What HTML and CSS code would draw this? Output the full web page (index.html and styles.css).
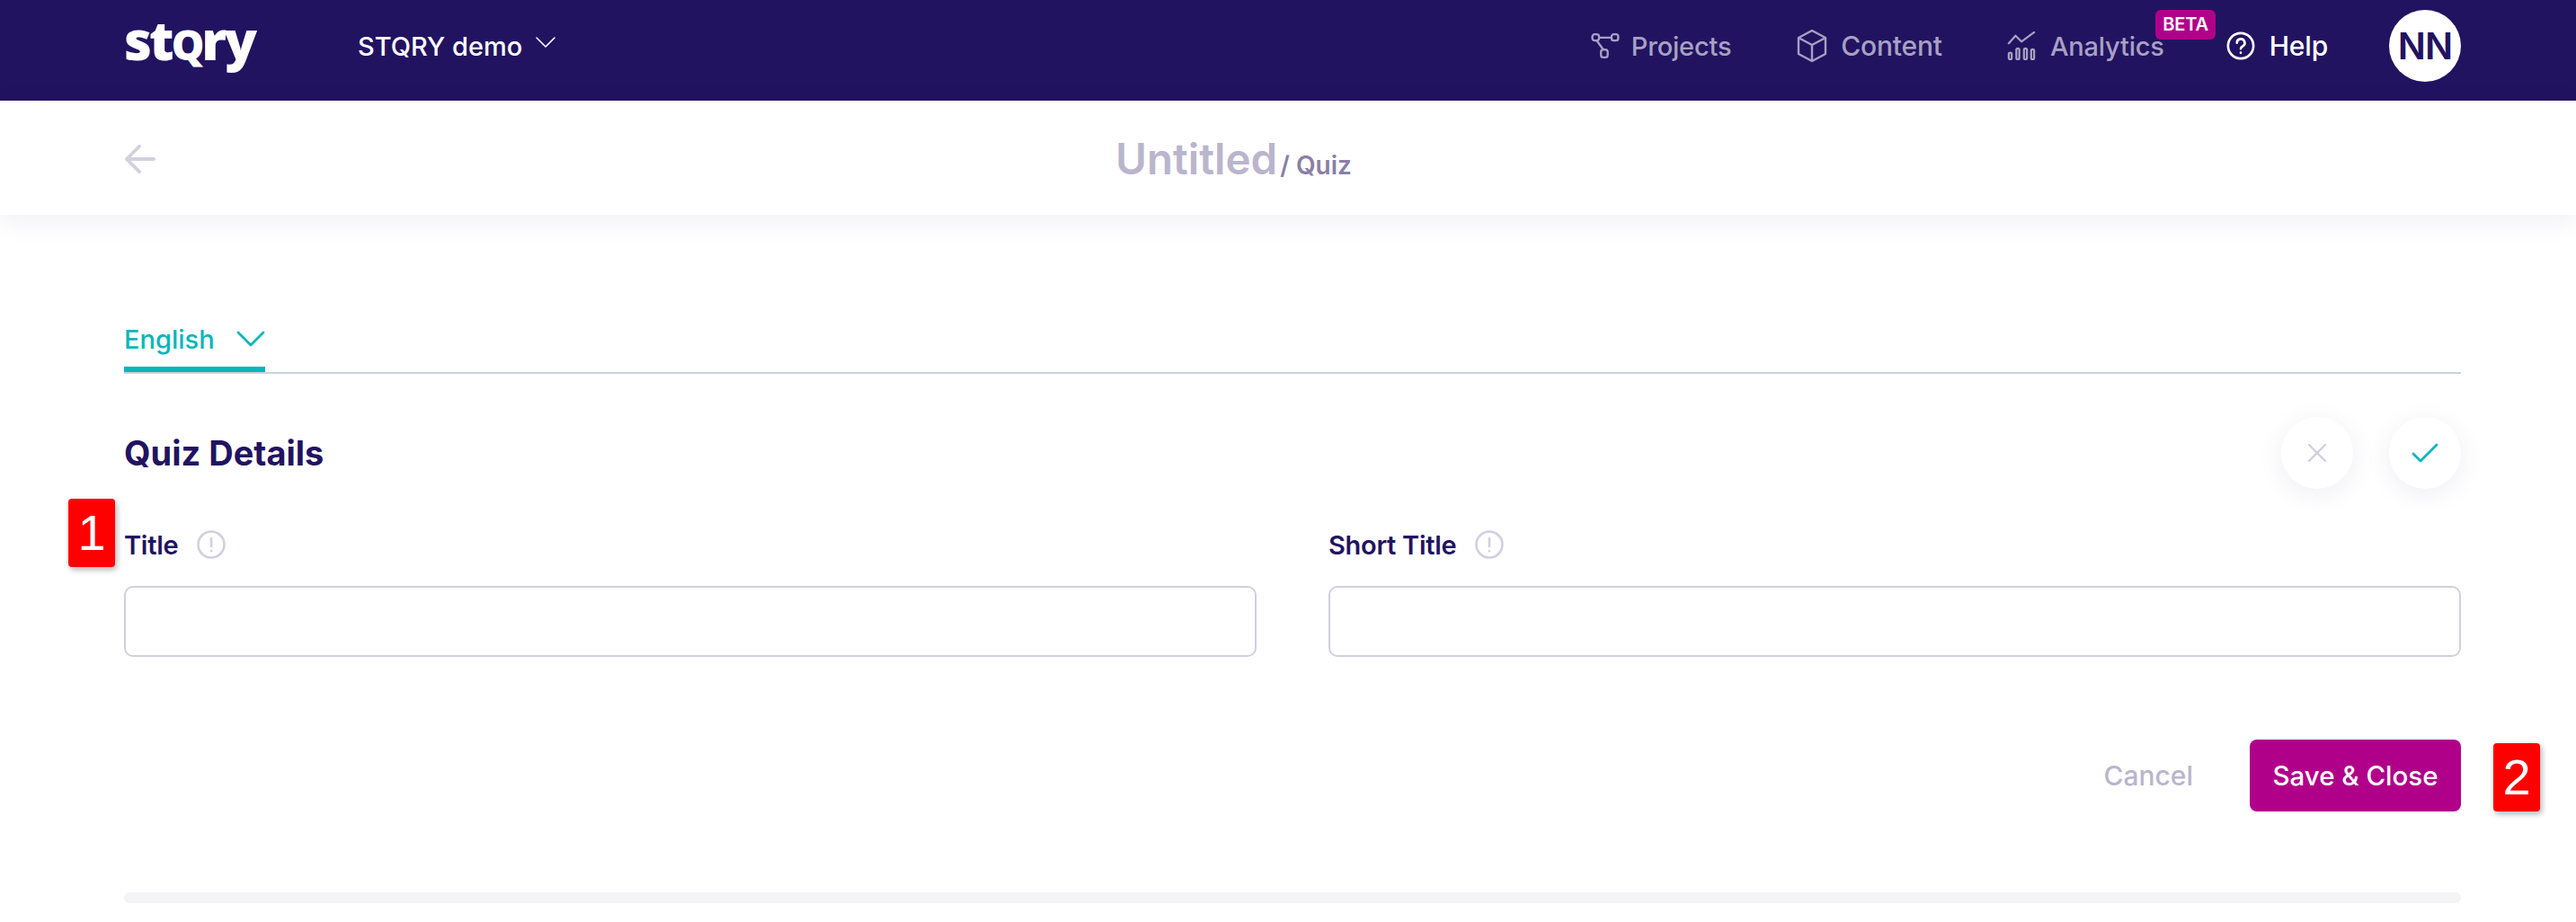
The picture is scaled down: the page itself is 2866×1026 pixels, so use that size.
FILE: index.html
```html
<!doctype html>
<html lang="en">
    <head>
        <meta charset="UTF-8" />
        <meta name="viewport" content="width=device-width, initial-scale=1.0" />
        <title>STQRY | Quiz</title>
        <link rel="stylesheet" href="styles.css">
    </head>
    <body>
        <header class="topbar">
            <div class="brand">
                <span class="logo">st<span class="logo-q">q</span>ry</span>
                <button class="project-menu">
                    STQRY demo
                    <svg class="chev" viewBox="0 0 24 14" fill="none" stroke="currentColor" stroke-width="1.6" stroke-linecap="round" stroke-linejoin="round">
                        <path d="M2 2l10 10L22 2" />
                    </svg>
                </button>
            </div>
            <nav class="mainnav">
                <a class="navlink projects">
                    <svg class="navicon" viewBox="0 0 30 30" fill="none" stroke="currentColor" stroke-width="2.2">
                        <rect x="1.500" y="3" width="7" height="6.500" rx="2.500" />
                        <rect x="21.500" y="3" width="7" height="6.500" rx="2.500" />
                        <rect x="10.500" y="19" width="7" height="8" rx="2.500" />
                        <path d="M8.500 6.500h13M6 9.500l7 9.500" />
                    </svg>
                    Projects
                </a>
                <a class="navlink content-link">
                    <svg class="navicon" viewBox="0 0 34 38" fill="none" stroke="currentColor" stroke-width="2.400" stroke-linejoin="round">
                        <path d="M17 2l15 8v18l-15 8-15-8V10z" />
                        <path d="M2 10l15 8 15-8M17 18v18" />
                    </svg>
                    Content
                </a>
                <a class="navlink analytics">
                    <svg class="navicon" viewBox="0 0 34 34" fill="none" stroke="currentColor" stroke-width="2.400" stroke-linecap="round" stroke-linejoin="round">
                        <path d="M2 14l8-9 7 7L32 1" />
                        <rect x="2" y="25" width="3.500" height="8" rx="1.700" />
                        <rect x="11" y="20" width="3.500" height="13" rx="1.700" />
                        <rect x="20" y="20" width="3.500" height="13" rx="1.700" />
                        <rect x="28.500" y="21" width="3.500" height="12" rx="1.700" />
                    </svg>
                    Analytics
                    <span class="beta">BETA</span>
                </a>
                <a class="navlink help">
                    <svg class="navicon" viewBox="0 0 34 34" fill="none" stroke="currentColor" stroke-width="2.800" stroke-linecap="round">
                        <circle cx="17" cy="17" r="15" />
                        <path d="M12.500 13.500a4.600 4.600 0 1 1 6.800 4c-1.500.8-2.300 1.600-2.300 3" />
                        <path d="M17 25v.3" />
                    </svg>
                    Help
                </a>
                <span class="avatar">NN</span>
            </nav>
        </header>

        <section class="subbar">
            <svg class="back" viewBox="0 0 38 36" fill="none" stroke="currentColor" stroke-width="4" stroke-linecap="round" stroke-linejoin="round">
                <path d="M35 18H3M18 3L3 18l15 15" />
            </svg>
            <h1 class="pagetitle">Untitled<span class="kind">/ Quiz</span></h1>
        </section>

        <main class="content">
            <div class="tabs">
                <button class="tab">
                    English
                    <svg class="tab-chev" viewBox="0 0 32 18" fill="none" stroke="currentColor" stroke-width="2.800" stroke-linecap="round" stroke-linejoin="round">
                        <path d="M2 2l14 14L30 2" />
                    </svg>
                </button>
            </div>

            <div class="section-head">
                <h2>Quiz Details</h2>
                <div class="round-actions">
                    <button class="round">
                        <svg viewBox="0 0 22 22" fill="none" stroke="#d1cfe0" stroke-width="2.400" stroke-linecap="round">
                            <path d="M2 2l18 18M20 2L2 20" />
                        </svg>
                    </button>
                    <button class="round">
                        <svg class="tick" viewBox="0 0 30 22" fill="none" stroke="#06b6bb" stroke-width="2.800" stroke-linecap="round" stroke-linejoin="round">
                            <path d="M2 12l8 8L28 2" />
                        </svg>
                    </button>
                </div>
            </div>

            <div class="fields">
                <div class="field">
                    <label class="field-label">
                        Title
                        <svg class="info" viewBox="0 0 32 32" fill="none" stroke="#d1cfe0" stroke-width="2.600" stroke-linecap="round">
                            <circle cx="16" cy="16" r="14.500" />
                            <path d="M16 9v9M16 23v.2" />
                        </svg>
                    </label>
                    <input class="text-input" type="text">
                    <span class="marker marker-one">1</span>
                </div>
                <div class="field">
                    <label class="field-label">
                        Short Title
                        <svg class="info" viewBox="0 0 32 32" fill="none" stroke="#d1cfe0" stroke-width="2.600" stroke-linecap="round">
                            <circle cx="16" cy="16" r="14.500" />
                            <path d="M16 9v9M16 23v.2" />
                        </svg>
                    </label>
                    <input class="text-input" type="text">
                </div>
            </div>

            <div class="form-actions">
                <button class="cancel">Cancel</button>
                <button class="save">Save &amp; Close</button>
                <span class="marker marker-two">2</span>
            </div>

            <div class="next-block"></div>
        </main>
    </body>
</html>
```

FILE: styles.css
```css
html,
body {
    margin: 0;
    padding: 0;
    height: 1026px;
    overflow: hidden;
    background-color: #fff;
    font-family: Inter, "Liberation Sans", sans-serif;
    color: #221361;
}

button {
    background: none;
    border: none;
    padding: 0;
    font-family: inherit;
}

.topbar {
    height: 112px;
    box-sizing: border-box;
    padding: 0 128px 10px 138px;
    background-color: #221361;
    display: flex;
    align-items: center;
    justify-content: space-between;
}

.brand {
    display: flex;
    align-items: center;
    gap: 110px;
}

.logo {
    color: #fff;
    font-family: "Open Sans", sans-serif;
    font-size: 60px;
    font-weight: 800;
    letter-spacing: -3px;
    line-height: 72px;
    margin-top: -10px;
    width: 150px;
}

.logo-q {
    font-size: 46px;
    text-transform: uppercase;
}

.project-menu {
    color: #fff;
    font-size: 29px;
    font-weight: 500;
    display: flex;
    align-items: center;
    gap: 14px;
}

.chev {
    width: 24px;
    height: 14px;
    margin-top: -8px;
}

.mainnav {
    display: flex;
    align-items: center;
}

.navlink {
    color: #a7a1c2;
    font-size: 29px;
    font-weight: 500;
    letter-spacing: -0.2px;
    display: flex;
    align-items: center;
    gap: 16px;
    margin-right: 72px;
}

.navicon {
    width: 32px;
    height: 32px;
}

.projects {
    gap: 13px;
}

.content-link {
    font-size: 30px;
    gap: 14px;
}

.content-link .navicon {
    width: 36px;
    height: 38px;
}

.analytics {
    position: relative;
    margin-right: 69px;
}

.beta {
    position: absolute;
    top: -23px;
    right: -57px;
    background-color: #b0008a;
    color: #fff;
    font-size: 20px;
    font-weight: 600;
    line-height: 33px;
    padding: 0 8px;
    border-radius: 6px;
}

.help {
    color: #fff;
    font-size: 30px;
    margin-right: 68px;
}

.avatar {
    width: 80px;
    height: 80px;
    border-radius: 50%;
    background-color: #fff;
    color: #221361;
    font-size: 41px;
    font-weight: 600;
    letter-spacing: -1px;
    display: flex;
    align-items: center;
    justify-content: center;
}

.subbar {
    height: 127px;
    box-sizing: border-box;
    padding-left: 138px;
    display: flex;
    align-items: center;
    gap: 1067px;
    box-shadow: 0 6px 30px rgba(34, 19, 97, 0.07);
}

.back {
    width: 36px;
    height: 34px;
    color: #d3d0e0;
    margin-top: 2px;
}

.pagetitle {
    margin: 0;
    color: #bab5cc;
    font-size: 47.500px;
    font-weight: 600;
    margin-top: 2px;
}

.kind {
    color: #8a7fa6;
    font-size: 28px;
    margin-left: 3px;
}

.content {
    padding: 0 128px 0 138px;
}

.tabs {
    margin-top: 115px;
    border-bottom: 2px solid #c7d4dc;
    display: flex;
}

.tab {
    width: 157px;
    height: 60px;
    box-sizing: border-box;
    color: #06b6bb;
    font-size: 29px;
    font-weight: 500;
    border-bottom: 6px solid #06b6bb;
    display: flex;
    align-items: center;
    justify-content: space-between;
    padding-bottom: 8px;
}

.tab-chev {
    width: 32px;
    height: 18px;
}

.section-head {
    display: flex;
    align-items: center;
    justify-content: space-between;
    margin-top: 48px;
}

.section-head h2 {
    margin: 0;
    font-size: 38px;
    font-weight: 700;
}

.round-actions {
    display: flex;
    gap: 40px;
}

.round {
    width: 80px;
    height: 80px;
    border-radius: 50%;
    background-color: #fff;
    box-shadow: 0 6px 30px rgba(34, 19, 97, 0.07);
    display: flex;
    align-items: center;
    justify-content: center;
}

.round svg {
    width: 22px;
    height: 22px;
}

.round .tick {
    width: 30px;
}

.fields {
    display: grid;
    grid-template-columns: 1fr 1fr;
    gap: 80px;
    margin-top: 40px;
}

.field {
    position: relative;
}

.field-label {
    display: flex;
    align-items: center;
    gap: 21px;
    font-size: 29px;
    font-weight: 600;
    letter-spacing: -0.3px;
    height: 44px;
    margin-bottom: 24px;
}

.info {
    width: 32px;
    height: 32px;
}

.text-input {
    display: block;
    width: 100%;
    height: 79px;
    box-sizing: border-box;
    border: 2px solid #d1cfe0;
    border-radius: 10px;
    background-color: #fff;
}

.marker {
    position: absolute;
    background-color: #f00;
    color: #fff;
    font-family: "Liberation Sans", sans-serif;
    font-size: 56px;
    line-height: 76px;
    width: 52px;
    text-align: center;
    border-radius: 4px;
    box-shadow: 2px 3px 6px rgba(0, 0, 0, 0.3);
}

.marker-one {
    left: -62px;
    top: -29px;
}

.marker-two {
    right: -88px;
    top: 4px;
}

.form-actions {
    position: relative;
    display: flex;
    align-items: center;
    justify-content: flex-end;
    gap: 63px;
    margin-top: 92px;
}

.cancel {
    color: #bab5cc;
    font-size: 30px;
    font-weight: 500;
}

.save {
    width: 235px;
    height: 80px;
    background-color: #b0008a;
    color: #fff;
    font-size: 29.500px;
    font-weight: 500;
    border-radius: 8px;
}

.next-block {
    height: 12px;
    margin-top: 90px;
    background-color: #f4f4f7;
    border-radius: 6px;
}
```
